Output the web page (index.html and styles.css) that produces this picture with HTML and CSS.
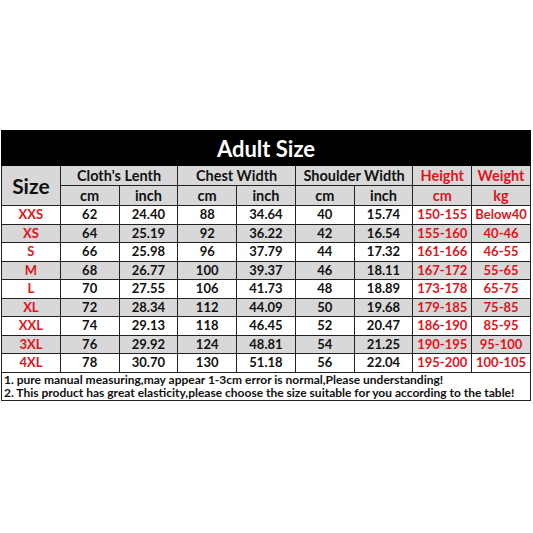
FILE: index.html
```html
<!DOCTYPE html>
<html lang="en">
<head>
<meta charset="utf-8">
<title>Adult Size</title>
<link rel="stylesheet" href="styles.css">
</head>
<body>
<div class="page">
<table class="chart">
  <colgroup>
    <col><col><col><col><col><col><col><col><col>
  </colgroup>
  <thead>
    <tr class="title"><th colspan="9">Adult Size</th></tr>
    <tr class="h1">
      <th rowspan="2" class="size-h">Size</th>
      <th colspan="2">Cloth's Lenth</th>
      <th colspan="2">Chest Width</th>
      <th colspan="2">Shoulder Width</th>
      <th class="red">Height</th>
      <th class="red">Weight</th>
    </tr>
    <tr class="h2">
      <th>cm</th><th>inch</th><th>cm</th><th>inch</th><th>cm</th><th>inch</th>
      <th class="red">cm</th><th class="red">kg</th>
    </tr>
  </thead>
  <tbody>
    <tr><td class="red">XXS</td><td>62</td><td>24.40</td><td>88</td><td>34.64</td><td>40</td><td>15.74</td><td class="red">150-155</td><td class="red">Below40</td></tr>
    <tr class="alt"><td class="red">XS</td><td>64</td><td>25.19</td><td>92</td><td>36.22</td><td>42</td><td>16.54</td><td class="red">155-160</td><td class="red">40-46</td></tr>
    <tr><td class="red">S</td><td>66</td><td>25.98</td><td>96</td><td>37.79</td><td>44</td><td>17.32</td><td class="red">161-166</td><td class="red">46-55</td></tr>
    <tr class="alt"><td class="red">M</td><td>68</td><td>26.77</td><td>100</td><td>39.37</td><td>46</td><td>18.11</td><td class="red">167-172</td><td class="red">55-65</td></tr>
    <tr><td class="red">L</td><td>70</td><td>27.55</td><td>106</td><td>41.73</td><td>48</td><td>18.89</td><td class="red">173-178</td><td class="red">65-75</td></tr>
    <tr class="alt"><td class="red">XL</td><td>72</td><td>28.34</td><td>112</td><td>44.09</td><td>50</td><td>19.68</td><td class="red">179-185</td><td class="red">75-85</td></tr>
    <tr><td class="red">XXL</td><td>74</td><td>29.13</td><td>118</td><td>46.45</td><td>52</td><td>20.47</td><td class="red">186-190</td><td class="red">85-95</td></tr>
    <tr class="alt"><td class="red">3XL</td><td>76</td><td>29.92</td><td>124</td><td>48.81</td><td>54</td><td>21.25</td><td class="red">190-195</td><td class="red">95-100</td></tr>
    <tr><td class="red">4XL</td><td>78</td><td>30.70</td><td>130</td><td>51.18</td><td>56</td><td>22.04</td><td class="red">195-200</td><td class="red">100-105</td></tr>
    <tr class="notes"><td colspan="9">
      <div>1. pure manual measuring,may appear 1-3cm error is normal,Please understanding!</div>
      <div>2. This product has great elasticity,please choose the size suitable for you according to the table!</div>
    </td></tr>
  </tbody>
</table>
</div>
</body>
</html>
```
FILE: styles.css
```css
html, body {
  margin: 0;
  padding: 0;
  background: #ffffff;
}
.page {
  padding: 130px 0 0 1px;
  font-family: "Lato", "Open Sans", "Liberation Sans", sans-serif;
  font-weight: 700;
  color: #111111;
}
.chart {
  width: 530px;
  border-collapse: collapse;
  table-layout: fixed;
  border: 1.5px solid #111;
}
.chart th, .chart td {
  border: 1.5px solid #222;
  padding: 0;
  text-align: center;
  white-space: nowrap;
  overflow: hidden;
}
.title th {
  background: #000;
  color: #fff;
  height: 34px;
  font-size: 22px;
  font-weight: 700;
  border-color: #000;
}
.h1 th, .h2 th {
  background: #d8d8d8;
  height: 19px;
  font-size: 14.5px;
  font-weight: 700;
}
.size-h {
  font-size: 21px !important;
}
.red {
  color: #e0141c;
}
tbody td {
  height: 17.5px;
  font-size: 13px;
  line-height: 17px;
  background: #ffffff;
}
tbody tr.alt td {
  background: #d8d8d8;
}
.notes td {
  text-align: left;
  font-size: 12px;
  line-height: 13.5px;
  padding: 0 0 0 2px;
  height: auto;
  color: #111;
}
```
